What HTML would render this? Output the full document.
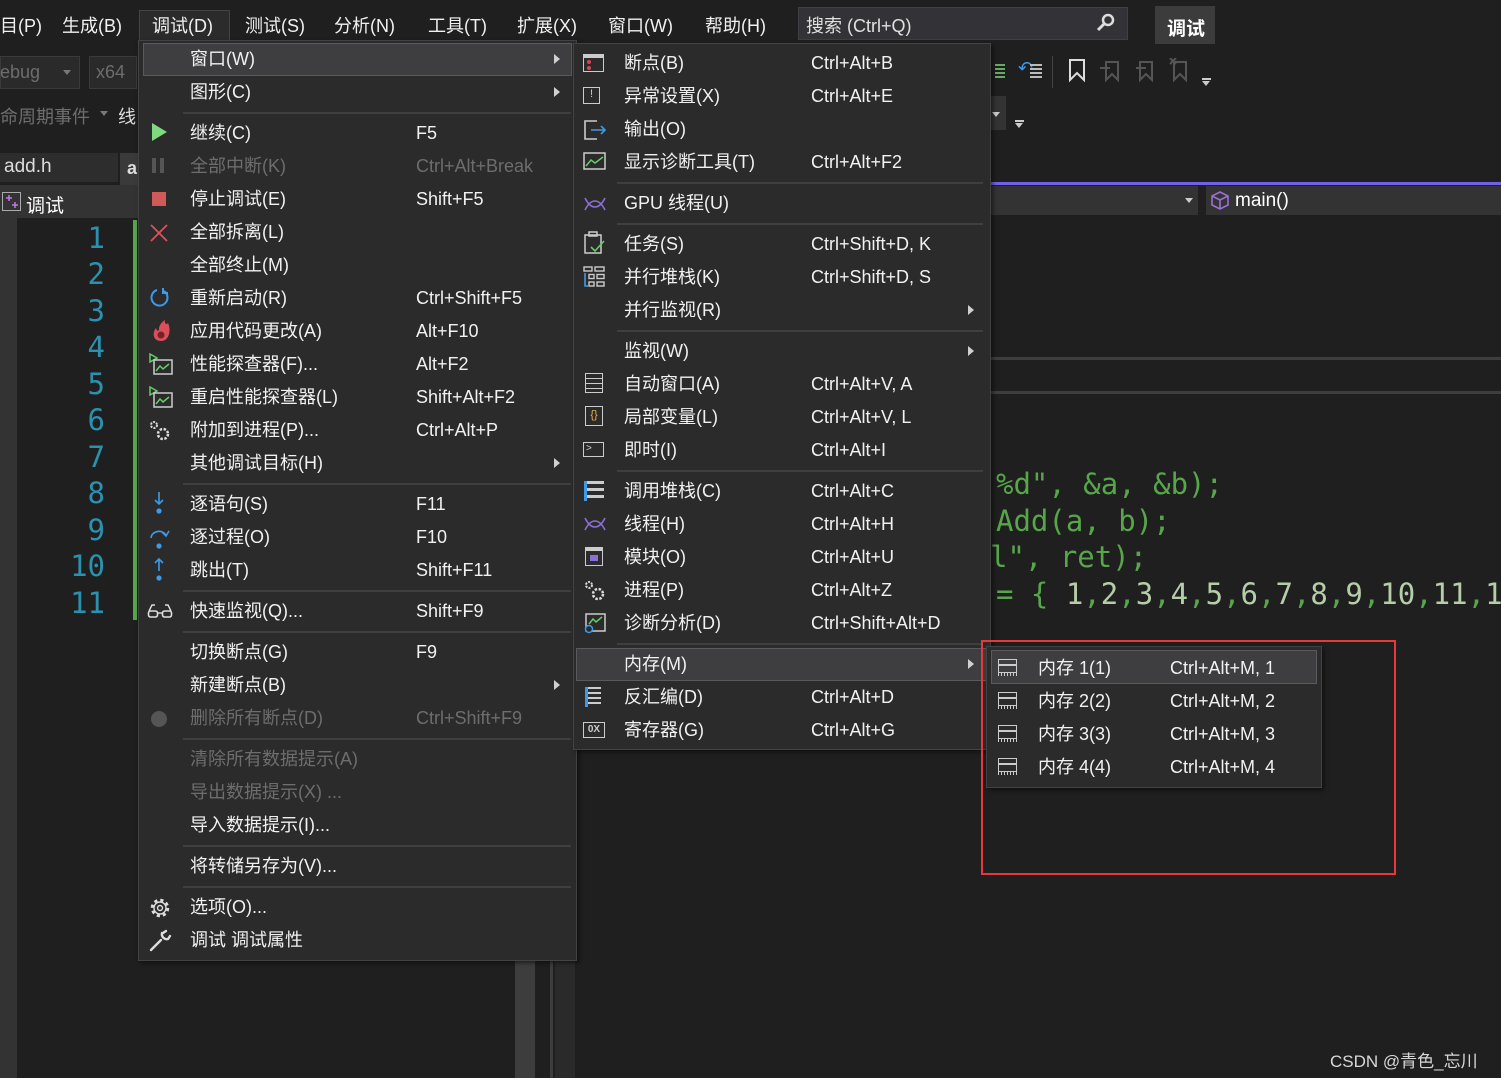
<!DOCTYPE html>
<html><head><meta charset="utf-8"><style>
*{margin:0;padding:0;box-sizing:border-box}
body{width:1501px;height:1078px;overflow:hidden;background:#1f1f1f;font-family:"Liberation Sans","Noto Sans CJK SC",sans-serif;color:#f1f1f1;position:relative}
.a{position:absolute;white-space:nowrap}
.mb{top:12px;font-size:18px;color:#f1f1f1}
.menu{position:absolute;background:#2b2b2b;border:1px solid #434346;box-shadow:2px 2px 4px rgba(0,0,0,.5)}
.t{position:absolute;font-size:18px;line-height:22px;white-space:nowrap;color:#f1f1f1}
.d{color:#6d6d6d}
.sep{position:absolute;height:2px;background:#3f3f41}
.arr{position:absolute;width:0;height:0;border-top:5px solid transparent;border-bottom:5px solid transparent;border-left:6px solid #d0d0d0}
.hl{position:absolute;background:#3e3e40;border:1px solid #5a5a5c}
.ln{position:absolute;right:1396px;font-family:"DejaVu Sans Mono","Liberation Mono",monospace;font-size:29px;color:#2b91af}
.code{position:absolute;font-family:"DejaVu Sans Mono","Liberation Mono",monospace;font-size:29px;color:#57a64a;white-space:pre}
.ic{position:absolute}
</style></head><body>
<div class="a" style="left:0;top:0;width:1501px;height:45px;background:#1f1f1f"></div>
<div class="a mb" style="left:0">目(P)</div>
<div class="a mb" style="left:62px">生成(B)</div>
<div class="a" style="left:139px;top:10px;width:91px;height:34px;background:#2b2b2b;border:1px solid #434346;border-bottom:none"></div>
<div class="a mb" style="left:152px">调试(D)</div>
<div class="a mb" style="left:245px">测试(S)</div>
<div class="a mb" style="left:334px">分析(N)</div>
<div class="a mb" style="left:428px">工具(T)</div>
<div class="a mb" style="left:517px">扩展(X)</div>
<div class="a mb" style="left:608px">窗口(W)</div>
<div class="a mb" style="left:705px">帮助(H)</div>
<div class="a" style="left:798px;top:7px;width:330px;height:33px;background:#333337;border:1px solid #3f3f46"></div>
<div class="a" style="left:806px;top:12px;font-size:18px;color:#e0e0e0">搜索 (Ctrl+Q)</div>
<svg class="ic" style="left:1095px;top:12px" width="22" height="22"><circle cx="13" cy="8" r="5" fill="none" stroke="#ddd" stroke-width="2.5"/><path d="M9 12 L3 18" stroke="#ddd" stroke-width="3"/></svg>
<div class="a" style="left:1155px;top:6px;width:60px;height:38px;background:#3c3c3c"></div>
<div class="a" style="left:1167px;top:14px;font-size:19px;font-weight:bold;color:#fff">调试</div>

<div class="a" style="left:0;top:56px;width:80px;height:33px;background:#2a2a2a;border:1px solid #3a3a3a"></div>
<div class="a" style="left:0;top:62px;font-size:18px;color:#6d6d6d">ebug</div>
<div class="a" style="left:63px;top:70px;border-top:5px solid #777;border-left:4px solid transparent;border-right:4px solid transparent"></div>
<div class="a" style="left:89px;top:56px;width:48px;height:33px;background:#2a2a2a;border:1px solid #3a3a3a"></div>
<div class="a" style="left:96px;top:62px;font-size:18px;color:#6d6d6d">x64</div>
<div class="a" style="left:0;top:103px;font-size:18px;color:#6d6d6d">命周期事件</div>
<div class="a" style="left:100px;top:111px;border-top:5px solid #777;border-left:4px solid transparent;border-right:4px solid transparent"></div>
<div class="a" style="left:118px;top:103px;font-size:18px;color:#ddd">线</div>
<div class="a" style="left:995px;top:64px;width:10px;height:16px;background:repeating-linear-gradient(#6a6 0 2px,transparent 2px 4px)"></div>
<div class="a" style="left:1018px;top:58px;font-size:18px;color:#3d9ae8">↶</div>
<div class="a" style="left:1030px;top:64px;width:12px;height:16px;background:repeating-linear-gradient(#bbb 0 2px,transparent 2px 4px)"></div>
<div class="a" style="left:1052px;top:56px;width:1px;height:32px;background:#444"></div>
<svg class="ic" style="left:1066px;top:58px" width="140" height="28"><path d="M4 2 H18 V22 L11 15 L4 22 Z" fill="none" stroke="#ddd" stroke-width="2"/><path d="M40 4 H52 V22 L46 16 L40 22 Z M34 10 H44" fill="none" stroke="#555" stroke-width="2"/><path d="M74 4 H86 V22 L80 16 L74 22 Z M70 10 H80" fill="none" stroke="#555" stroke-width="2"/><path d="M108 4 H120 V22 L114 16 L108 22 Z M104 0 L110 6 M110 0 L104 6" fill="none" stroke="#555" stroke-width="2"/></svg>
<div class="a" style="left:1202px;top:78px;width:9px;height:2px;background:#ccc"></div>
<div class="a" style="left:1202px;top:81px;border-top:5px solid #ccc;border-left:4.5px solid transparent;border-right:4.5px solid transparent"></div>
<div class="a" style="left:990px;top:96px;width:16px;height:34px;background:#333"></div>
<div class="a" style="left:992px;top:112px;border-top:5px solid #ccc;border-left:4px solid transparent;border-right:4px solid transparent"></div>
<div class="a" style="left:1015px;top:120px;width:9px;height:2px;background:#ccc"></div>
<div class="a" style="left:1015px;top:123px;border-top:5px solid #ccc;border-left:4.5px solid transparent;border-right:4.5px solid transparent"></div>

<div class="a" style="left:0;top:153px;width:118px;height:29px;background:#2d2d2d"></div>
<div class="a" style="left:4px;top:156px;font-size:19px;color:#ddd">add.h</div>
<div class="a" style="left:120px;top:153px;width:20px;height:32px;background:#3a3a3a"></div>
<div class="a" style="left:127px;top:158px;font-size:18px;color:#ddd;font-weight:bold">a</div>
<div class="a" style="left:0;top:185px;width:140px;height:33px;background:#333"></div>
<svg class="ic" style="left:2px;top:192px" width="20" height="20"><rect x="0.5" y="0.5" width="18" height="18" fill="none" stroke="#aaa"/><path d="M4 6 H10 M7 3 V9 M10 13 H16 M13 10 V16" stroke="#c377e0" stroke-width="1.5"/></svg>
<div class="a" style="left:26px;top:191px;font-size:19px;color:#fff">调试</div>
<div class="a" style="left:990px;top:182px;width:511px;height:3px;background:#7160e8"></div>
<div class="a" style="left:990px;top:186px;width:208px;height:29px;background:#333"></div>
<div class="a" style="left:1185px;top:198px;border-top:5px solid #ccc;border-left:4px solid transparent;border-right:4px solid transparent"></div>
<div class="a" style="left:1206px;top:186px;width:295px;height:29px;background:#333"></div>
<svg class="ic" style="left:1210px;top:190px" width="22" height="22"><path d="M10 2 L18 6 V15 L10 19 L2 15 V6 Z M2 6 L10 10 L18 6 M10 10 V19" fill="none" stroke="#9b6fd6" stroke-width="1.6"/></svg>
<div class="a" style="left:1235px;top:190px;font-size:19px;color:#fff">main()</div>
<div class="a" style="left:990px;top:357px;width:511px;height:3px;background:#3e3e3e"></div>
<div class="a" style="left:990px;top:391px;width:511px;height:3px;background:#3e3e3e"></div>

<div class="a" style="left:0;top:218px;width:17px;height:860px;background:#333"></div>
<div class="a" style="left:133px;top:220px;width:4px;height:400px;background:#57a64a"></div>
<div class="ln" style="top:221px">1</div>
<div class="ln" style="top:257px">2</div>
<div class="ln" style="top:294px">3</div>
<div class="ln" style="top:330px">4</div>
<div class="ln" style="top:367px">5</div>
<div class="ln" style="top:403px">6</div>
<div class="ln" style="top:440px">7</div>
<div class="ln" style="top:476px">8</div>
<div class="ln" style="top:513px">9</div>
<div class="ln" style="top:549px">10</div>
<div class="ln" style="top:586px">11</div>
<div class="a" style="left:515px;top:960px;width:20px;height:118px;background:#3d3d3d"></div>
<div class="a" style="left:550px;top:960px;width:3px;height:118px;background:#3d3d3d"></div>
<div class="a" style="left:555px;top:960px;width:20px;height:118px;background:#2a2a2a"></div>

<div class="code" style="left:996px;top:467px">%d", &amp;a, &amp;b);</div>
<div class="code" style="left:996px;top:504px">Add(a, b);</div>
<div class="code" style="left:990px;top:540px">l", ret);</div>
<div class="code" style="left:996px;top:577px">= { <span style="color:#b5cea8">1</span>,<span style="color:#b5cea8">2</span>,<span style="color:#b5cea8">3</span>,<span style="color:#b5cea8">4</span>,<span style="color:#b5cea8">5</span>,<span style="color:#b5cea8">6</span>,<span style="color:#b5cea8">7</span>,<span style="color:#b5cea8">8</span>,<span style="color:#b5cea8">9</span>,<span style="color:#b5cea8">10</span>,<span style="color:#b5cea8">11</span>,<span style="color:#b5cea8">1</span></div>

<div class="menu" style="left:138px;top:40px;width:439px;height:921px">
<div class="hl" style="left:4px;top:2px;width:429px;height:33px"></div>
<div class="t" style="left:51px;top:7px">窗口(W)</div><div class="arr" style="left:415px;top:13px"></div>
<div class="t" style="left:51px;top:40px">图形(C)</div><div class="arr" style="left:415px;top:46px"></div>
<div class="sep" style="left:44px;top:71px;width:388px"></div>
<div class="ic" style="left:13px;top:82px;width:0;height:0;border-top:9px solid transparent;border-bottom:9px solid transparent;border-left:15px solid #7fd97f"></div>
<div class="t" style="left:51px;top:81px">继续(C)</div><div class="t" style="left:277px;top:81px">F5</div>
<div class="ic" style="left:13px;top:117px;width:4px;height:15px;background:#555"></div><div class="ic" style="left:21px;top:117px;width:4px;height:15px;background:#555"></div>
<div class="t d" style="left:51px;top:114px">全部中断(K)</div><div class="t d" style="left:277px;top:114px">Ctrl+Alt+Break</div>
<div class="ic" style="left:13px;top:151px;width:14px;height:14px;background:#d05a5a"></div>
<div class="t" style="left:51px;top:147px">停止调试(E)</div><div class="t" style="left:277px;top:147px">Shift+F5</div>
<svg class="ic" style="left:10px;top:182px" width="20" height="20"><path d="M2 2 L18 18 M18 2 L2 18" stroke="#e0505a" stroke-width="1.8"/></svg>
<div class="t" style="left:51px;top:180px">全部拆离(L)</div>
<div class="t" style="left:51px;top:213px">全部终止(M)</div>
<svg class="ic" style="left:10px;top:246px" width="22" height="22"><path d="M8 3 A8 8 0 1 0 15 4" fill="none" stroke="#3d9ae8" stroke-width="2"/><path d="M14 1 V6 H19" fill="none" stroke="#3d9ae8" stroke-width="2"/></svg>
<div class="t" style="left:51px;top:246px">重新启动(R)</div><div class="t" style="left:277px;top:246px">Ctrl+Shift+F5</div>
<svg class="ic" style="left:11px;top:278px" width="22" height="24"><path d="M11 22 C3 22 2 14 6 9 C7 13 9 12 9 10 C9 6 12 3 15 1 C14 5 17 6 18 4 C21 10 20 22 11 22Z" fill="#d94f5c"/><circle cx="11" cy="16" r="3.5" fill="#7a1f28"/></svg>
<div class="t" style="left:51px;top:279px">应用代码更改(A)</div><div class="t" style="left:277px;top:279px">Alt+F10</div>
<svg class="ic" style="left:9px;top:312px" width="26" height="24"><path d="M2 1 L9 5 L2 9Z" fill="none" stroke="#6c6" stroke-width="1.5"/><rect x="6" y="7" width="18" height="14" fill="none" stroke="#ccc" stroke-width="1.5"/><path d="M8 18 L12 13 L15 16 L21 11" fill="none" stroke="#6c6" stroke-width="1.5"/></svg>
<div class="t" style="left:51px;top:312px">性能探查器(F)...</div><div class="t" style="left:277px;top:312px">Alt+F2</div>
<svg class="ic" style="left:9px;top:345px" width="26" height="24"><path d="M2 1 L9 5 L2 9Z" fill="none" stroke="#6c6" stroke-width="1.5"/><rect x="6" y="7" width="18" height="14" fill="none" stroke="#ccc" stroke-width="1.5"/><path d="M8 18 L12 13 L15 16 L21 11" fill="none" stroke="#6c6" stroke-width="1.5"/></svg>
<div class="t" style="left:51px;top:345px">重启性能探查器(L)</div><div class="t" style="left:277px;top:345px">Shift+Alt+F2</div>
<svg class="ic" style="left:9px;top:378px" width="26" height="24"><circle cx="6" cy="6" r="3" fill="none" stroke="#ddd" stroke-width="2" stroke-dasharray="2 1.2"/><circle cx="15" cy="15" r="5" fill="none" stroke="#ddd" stroke-width="2.5" stroke-dasharray="2.5 1.5"/></svg>
<div class="t" style="left:51px;top:378px">附加到进程(P)...</div><div class="t" style="left:277px;top:378px">Ctrl+Alt+P</div>
<div class="t" style="left:51px;top:411px">其他调试目标(H)</div><div class="arr" style="left:415px;top:417px"></div>
<div class="sep" style="left:44px;top:442px;width:388px"></div>
<svg class="ic" style="left:10px;top:450px" width="20" height="26"><path d="M10 1 V13 M6 9 L10 13 L14 9" fill="none" stroke="#3d9ae8" stroke-width="1.6"/><circle cx="10" cy="20" r="2.6" fill="#3d9ae8"/></svg>
<div class="t" style="left:51px;top:452px">逐语句(S)</div><div class="t" style="left:277px;top:452px">F11</div>
<svg class="ic" style="left:9px;top:485px" width="24" height="26"><path d="M3 12 A8 7 0 0 1 18 9 M14 6 L18 10 L21 5" fill="none" stroke="#3d9ae8" stroke-width="1.6"/><circle cx="11" cy="20" r="2.6" fill="#3d9ae8"/></svg>
<div class="t" style="left:51px;top:485px">逐过程(O)</div><div class="t" style="left:277px;top:485px">F10</div>
<svg class="ic" style="left:10px;top:516px" width="20" height="26"><path d="M10 14 V2 M6 6 L10 2 L14 6" fill="none" stroke="#3d9ae8" stroke-width="1.6"/><circle cx="10" cy="21" r="2.6" fill="#3d9ae8"/></svg>
<div class="t" style="left:51px;top:518px">跳出(T)</div><div class="t" style="left:277px;top:518px">Shift+F11</div>
<div class="sep" style="left:44px;top:549px;width:388px"></div>
<svg class="ic" style="left:8px;top:562px" width="26" height="16"><path d="M2 8 L5 2 H8 M24 8 L21 2 H18" fill="none" stroke="#ddd" stroke-width="1.4"/><rect x="1.5" y="8" width="9" height="6" rx="2" fill="none" stroke="#ddd" stroke-width="1.6"/><rect x="15.5" y="8" width="9" height="6" rx="2" fill="none" stroke="#ddd" stroke-width="1.6"/><path d="M10 10 H16" stroke="#ddd" stroke-width="1.4"/></svg>
<div class="t" style="left:51px;top:559px">快速监视(Q)...</div><div class="t" style="left:277px;top:559px">Shift+F9</div>
<div class="sep" style="left:44px;top:590px;width:388px"></div>
<div class="t" style="left:51px;top:600px">切换断点(G)</div><div class="t" style="left:277px;top:600px">F9</div>
<div class="t" style="left:51px;top:633px">新建断点(B)</div><div class="arr" style="left:415px;top:639px"></div>
<div class="ic" style="left:12px;top:670px;width:16px;height:16px;border-radius:50%;background:#555"></div>
<div class="t d" style="left:51px;top:666px">删除所有断点(D)</div><div class="t d" style="left:277px;top:666px">Ctrl+Shift+F9</div>
<div class="sep" style="left:44px;top:697px;width:388px"></div>
<div class="t d" style="left:51px;top:707px">清除所有数据提示(A)</div>
<div class="t d" style="left:51px;top:740px">导出数据提示(X) ...</div>
<div class="t" style="left:51px;top:773px">导入数据提示(I)...</div>
<div class="sep" style="left:44px;top:804px;width:388px"></div>
<div class="t" style="left:51px;top:814px">将转储另存为(V)...</div>
<div class="sep" style="left:44px;top:845px;width:388px"></div>
<svg class="ic" style="left:9px;top:855px" width="24" height="24"><circle cx="12" cy="12" r="7.5" fill="none" stroke="#ddd" stroke-width="3.5" stroke-dasharray="3 2.9"/><circle cx="12" cy="12" r="6" fill="none" stroke="#ddd" stroke-width="1.4"/><circle cx="12" cy="12" r="2.5" fill="none" stroke="#ddd" stroke-width="1.4"/></svg>
<div class="t" style="left:51px;top:855px">选项(O)...</div>
<svg class="ic" style="left:9px;top:888px" width="24" height="24"><path d="M3 21 L13 11 M14 4 A5 5 0 0 0 20 10 L22 7 M15 4 L18 2" fill="none" stroke="#ddd" stroke-width="2.4" stroke-linecap="round"/></svg>
<div class="t" style="left:51px;top:888px">调试 调试属性</div>
</div>

<div class="menu" style="left:573px;top:43px;width:418px;height:707px">
<div class="ic" style="left:9px;top:10px;width:21px;height:18px;border:1.5px solid #ccc;border-top-width:4px"><div style="position:absolute;left:3px;top:2px;width:4px;height:4px;border-radius:50%;background:#e04050"></div><div style="position:absolute;left:3px;top:8px;width:4px;height:4px;border-radius:50%;background:#e04050"></div></div>
<div class="t" style="left:50px;top:8px">断点(B)</div><div class="t" style="left:237px;top:8px">Ctrl+Alt+B</div>
<div class="ic" style="left:9px;top:43px;width:17px;height:17px;border:1.5px solid #ccc;font-size:11px;line-height:13px;text-align:center;color:#ccc">!</div>
<div class="t" style="left:50px;top:41px">异常设置(X)</div><div class="t" style="left:237px;top:41px">Ctrl+Alt+E</div>
<svg class="ic" style="left:9px;top:75px" width="26" height="22"><path d="M14 2 H2 V20 H14" fill="none" stroke="#ccc" stroke-width="1.6"/><path d="M8 11 H22 M18 7 L22 11 L18 15" fill="none" stroke="#3d9ae8" stroke-width="1.6"/></svg>
<div class="t" style="left:50px;top:74px">输出(O)</div>
<svg class="ic" style="left:9px;top:107px" width="24" height="22"><rect x="1" y="2" width="21" height="16" fill="none" stroke="#ccc" stroke-width="1.5"/><path d="M3 15 L8 9 L12 12 L20 6" fill="none" stroke="#6c6" stroke-width="1.5"/></svg>
<div class="t" style="left:50px;top:107px">显示诊断工具(T)</div><div class="t" style="left:237px;top:107px">Ctrl+Alt+F2</div>
<div class="sep" style="left:43px;top:138px;width:366px"></div>
<svg class="ic" style="left:9px;top:150px" width="24" height="20"><path d="M2 4 C8 16 16 16 22 4 M2 16 C8 4 16 4 22 16" fill="none" stroke="#8a6fd6" stroke-width="1.6"/></svg>
<div class="t" style="left:50px;top:148px">GPU 线程(U)</div>
<div class="sep" style="left:43px;top:179px;width:366px"></div>
<svg class="ic" style="left:9px;top:187px" width="24" height="24"><rect x="2" y="4" width="16" height="18" fill="none" stroke="#ccc" stroke-width="1.5"/><rect x="6" y="1" width="8" height="4" fill="none" stroke="#ccc" stroke-width="1.5"/><path d="M8 16 L12 20 L21 10" fill="none" stroke="#6c6" stroke-width="1.6"/></svg>
<div class="t" style="left:50px;top:189px">任务(S)</div><div class="t" style="left:237px;top:189px">Ctrl+Shift+D, K</div>
<svg class="ic" style="left:9px;top:222px" width="24" height="22"><rect x="1" y="1" width="8" height="4" fill="none" stroke="#ccc" stroke-width="1.4"/><rect x="12" y="1" width="9" height="4" fill="none" stroke="#ccc" stroke-width="1.4"/><rect x="6" y="8.5" width="5" height="4" fill="none" stroke="#ccc" stroke-width="1.4"/><rect x="14" y="8.5" width="7" height="4" fill="none" stroke="#ccc" stroke-width="1.4"/><rect x="6" y="16" width="5" height="4" fill="none" stroke="#ccc" stroke-width="1.4"/><rect x="14" y="16" width="7" height="4" fill="none" stroke="#ccc" stroke-width="1.4"/><path d="M2 7 V20 H5" fill="none" stroke="#3d9ae8" stroke-width="1.6"/></svg>
<div class="t" style="left:50px;top:222px">并行堆栈(K)</div><div class="t" style="left:237px;top:222px">Ctrl+Shift+D, S</div>
<div class="t" style="left:50px;top:255px">并行监视(R)</div><div class="arr" style="left:394px;top:261px"></div>
<div class="sep" style="left:43px;top:286px;width:366px"></div>
<div class="t" style="left:50px;top:296px">监视(W)</div><div class="arr" style="left:394px;top:302px"></div>
<div class="ic" style="left:11px;top:329px;width:18px;height:20px;border:1.5px solid #ccc;background:repeating-linear-gradient(transparent 0 4px,#ccc 4px 5px)"></div>
<div class="t" style="left:50px;top:329px">自动窗口(A)</div><div class="t" style="left:237px;top:329px">Ctrl+Alt+V, A</div>
<div class="ic" style="left:11px;top:362px;width:18px;height:20px;border:1.5px solid #ccc;font-size:11px;color:#e8b04a;text-align:center;line-height:16px">{}</div>
<div class="t" style="left:50px;top:362px">局部变量(L)</div><div class="t" style="left:237px;top:362px">Ctrl+Alt+V, L</div>
<div class="ic" style="left:9px;top:398px;width:21px;height:15px;border:1.5px solid #ccc;font-size:10px;line-height:12px;color:#ccc;padding-left:2px">&gt;</div>
<div class="t" style="left:50px;top:395px">即时(I)</div><div class="t" style="left:237px;top:395px">Ctrl+Alt+I</div>
<div class="sep" style="left:43px;top:426px;width:366px"></div>
<div class="ic" style="left:10px;top:437px;width:20px;height:20px;background:repeating-linear-gradient(#ccc 0 3px,transparent 3px 7px);border-left:3px solid #3d9ae8"></div>
<div class="t" style="left:50px;top:436px">调用堆栈(C)</div><div class="t" style="left:237px;top:436px">Ctrl+Alt+C</div>
<svg class="ic" style="left:9px;top:470px" width="24" height="20"><path d="M2 4 C8 16 16 16 22 4 M2 16 C8 4 16 4 22 16" fill="none" stroke="#8a6fd6" stroke-width="1.6"/></svg>
<div class="t" style="left:50px;top:469px">线程(H)</div><div class="t" style="left:237px;top:469px">Ctrl+Alt+H</div>
<div class="ic" style="left:11px;top:503px;width:18px;height:19px;border:1.5px solid #ccc;border-top-width:4px"><div style="margin:4px 4px;width:8px;height:6px;background:#8a6fd6"></div></div>
<div class="t" style="left:50px;top:502px">模块(O)</div><div class="t" style="left:237px;top:502px">Ctrl+Alt+U</div>
<svg class="ic" style="left:9px;top:535px" width="26" height="24"><circle cx="6" cy="6" r="3" fill="none" stroke="#ddd" stroke-width="2" stroke-dasharray="2 1.2"/><circle cx="15" cy="15" r="5" fill="none" stroke="#ddd" stroke-width="2.5" stroke-dasharray="2.5 1.5"/></svg>
<div class="t" style="left:50px;top:535px">进程(P)</div><div class="t" style="left:237px;top:535px">Ctrl+Alt+Z</div>
<svg class="ic" style="left:9px;top:568px" width="24" height="24"><rect x="3" y="2" width="19" height="17" fill="none" stroke="#ccc" stroke-width="1.5"/><path d="M6 12 L10 7 L13 10 L19 5" fill="none" stroke="#6c6" stroke-width="1.5"/><circle cx="6" cy="17" r="3.5" fill="#2b2b2b" stroke="#3d9ae8" stroke-width="1.5"/></svg>
<div class="t" style="left:50px;top:568px">诊断分析(D)</div><div class="t" style="left:237px;top:568px">Ctrl+Shift+Alt+D</div>
<div class="sep" style="left:43px;top:599px;width:366px"></div>
<div class="hl" style="left:2px;top:604px;width:412px;height:33px"></div>
<div class="t" style="left:50px;top:609px">内存(M)</div><div class="arr" style="left:394px;top:615px"></div>
<div class="ic" style="left:11px;top:643px;width:16px;height:20px;background:repeating-linear-gradient(#ccc 0 2px,transparent 2px 5px);border-left:3px solid #3d9ae8"></div>
<div class="t" style="left:50px;top:642px">反汇编(D)</div><div class="t" style="left:237px;top:642px">Ctrl+Alt+D</div>
<div class="ic" style="left:9px;top:678px;width:22px;height:16px;border:1.5px solid #ccc;font-size:10px;font-weight:bold;line-height:13px;text-align:center;color:#ccc">0X</div>
<div class="t" style="left:50px;top:675px">寄存器(G)</div><div class="t" style="left:237px;top:675px">Ctrl+Alt+G</div>
</div>

<div class="menu" style="left:986px;top:646px;width:336px;height:142px">
<div class="hl" style="left:4px;top:3px;width:326px;height:34px"></div>
<div class="ic" style="left:11px;top:12px;width:19px;height:14px;border:1.5px solid #ccc;background:linear-gradient(transparent 4px,#ccc 4px 6px,transparent 6px)"></div><div class="ic" style="left:11px;top:26px;width:19px;height:3px;background:repeating-linear-gradient(90deg,#ccc 0 1px,transparent 1px 3px)"></div>
<div class="t" style="left:51px;top:10px">内存 1(1)</div><div class="t" style="left:183px;top:10px">Ctrl+Alt+M, 1</div>
<div class="ic" style="left:11px;top:45px;width:19px;height:14px;border:1.5px solid #ccc;background:linear-gradient(transparent 4px,#ccc 4px 6px,transparent 6px)"></div><div class="ic" style="left:11px;top:59px;width:19px;height:3px;background:repeating-linear-gradient(90deg,#ccc 0 1px,transparent 1px 3px)"></div>
<div class="t" style="left:51px;top:43px">内存 2(2)</div><div class="t" style="left:183px;top:43px">Ctrl+Alt+M, 2</div>
<div class="ic" style="left:11px;top:78px;width:19px;height:14px;border:1.5px solid #ccc;background:linear-gradient(transparent 4px,#ccc 4px 6px,transparent 6px)"></div><div class="ic" style="left:11px;top:92px;width:19px;height:3px;background:repeating-linear-gradient(90deg,#ccc 0 1px,transparent 1px 3px)"></div>
<div class="t" style="left:51px;top:76px">内存 3(3)</div><div class="t" style="left:183px;top:76px">Ctrl+Alt+M, 3</div>
<div class="ic" style="left:11px;top:111px;width:19px;height:14px;border:1.5px solid #ccc;background:linear-gradient(transparent 4px,#ccc 4px 6px,transparent 6px)"></div><div class="ic" style="left:11px;top:125px;width:19px;height:3px;background:repeating-linear-gradient(90deg,#ccc 0 1px,transparent 1px 3px)"></div>
<div class="t" style="left:51px;top:109px">内存 4(4)</div><div class="t" style="left:183px;top:109px">Ctrl+Alt+M, 4</div>
</div>

<div class="a" style="left:981px;top:640px;width:415px;height:235px;border:2px solid #e8383b"></div>
<div class="a" style="left:1330px;top:1047px;font-size:17px;color:#d8d8d8">CSDN @青色_忘川</div>
</body></html>
